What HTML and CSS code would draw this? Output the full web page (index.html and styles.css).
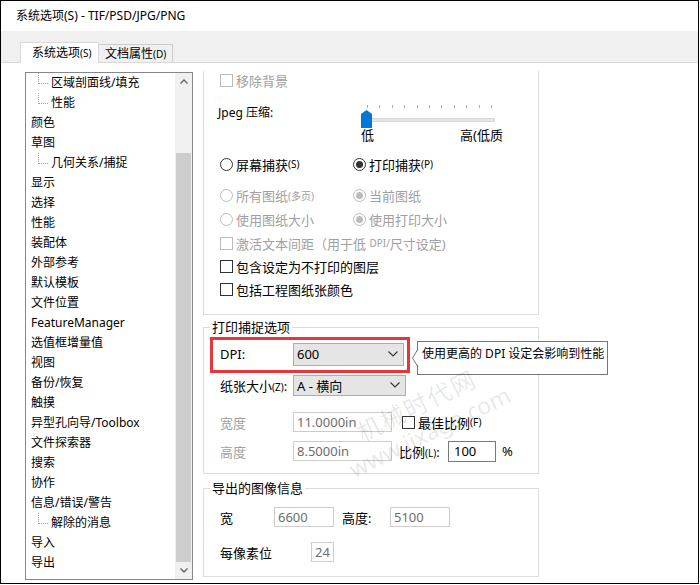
FILE: index.html
```html
<!DOCTYPE html>
<html lang="zh-CN">
<head>
    <meta charset="UTF-8">
    <title>系统选项(S) - TIF/PSD/JPG/PNG</title>
    <link rel="stylesheet" href="styles.css">
</head>
<body>
    <div class="window">
        <div class="titlebar">系统选项(S) - TIF/PSD/JPG/PNG</div>

        <div class="tabs">
            <div class="tab active">系统选项<span class="mn">(S)</span></div>
            <div class="tab">文档属性<span class="mn">(D)</span></div>
        </div>

        <div class="panel">
            <div class="tree">
                <ul class="tree-list">
                    <li><span class="branch"></span>区域剖面线/填充</li>
                    <li><span class="branch"></span>性能</li>
                    <li>颜色</li>
                    <li>草图</li>
                    <li><span class="branch"></span>几何关系/捕捉</li>
                    <li>显示</li>
                    <li>选择</li>
                    <li>性能</li>
                    <li>装配体</li>
                    <li>外部参考</li>
                    <li>默认模板</li>
                    <li>文件位置</li>
                    <li>FeatureManager</li>
                    <li>选值框增量值</li>
                    <li>视图</li>
                    <li>备份/恢复</li>
                    <li>触摸</li>
                    <li>异型孔向导/Toolbox</li>
                    <li>文件探索器</li>
                    <li>搜索</li>
                    <li>协作</li>
                    <li>信息/错误/警告</li>
                    <li><span class="branch"></span>解除的消息</li>
                    <li>导入</li>
                    <li>导出</li>
                </ul>
                <div class="vscroll">
                    <div class="sb-btn">
                        <svg width="8" height="5" viewBox="0 0 8 5"><polyline points="0.5,4.5 4,1 7.5,4.5" fill="none" stroke="#606060" stroke-width="1.3"/></svg>
                    </div>
                    <div class="sb-track"><div class="sb-thumb"></div></div>
                    <div class="sb-btn">
                        <svg width="8" height="5" viewBox="0 0 8 5"><polyline points="0.5,0.5 4,4 7.5,0.5" fill="none" stroke="#606060" stroke-width="1.3"/></svg>
                    </div>
                </div>
            </div>

            <div class="options">
                <!-- first group is scrolled, its title is out of view -->
                <div class="group group-cut">
                    <div class="group-body">
                        <div class="opt-row first disabled"><span class="check"></span>移除背景</div>

                        <div class="jpeg">
                            <div class="jpeg-label">Jpeg 压缩:</div>
                            <div class="slider">
                                <div class="ticks">
                                    <i></i><i></i><i></i><i></i><i></i><i></i><i></i><i></i><i></i><i></i><i></i>
                                </div>
                                <div class="track-row">
                                    <div class="track"></div>
                                    <div class="thumb"></div>
                                </div>
                                <div class="slider-labels"><span>低</span><span>高(低质</span></div>
                            </div>
                        </div>

                        <div class="opt-row">
                            <div class="col"><span class="radio"></span>屏幕捕获<span class="mn">(S)</span></div>
                            <div class="col"><span class="radio on"></span>打印捕获<span class="mn">(P)</span></div>
                        </div>
                        <div class="opt-row spaced disabled">
                            <div class="col"><span class="radio"></span>所有图纸<span class="mn">(多页)</span></div>
                            <div class="col"><span class="radio on"></span>当前图纸</div>
                        </div>
                        <div class="opt-row disabled">
                            <div class="col"><span class="radio"></span>使用图纸大小</div>
                            <div class="col"><span class="radio on"></span>使用打印大小</div>
                        </div>
                        <div class="opt-row disabled"><span class="check"></span>激活文本间距（用于低&nbsp;<span class="mn">DPI/</span>尺寸设定)</div>
                        <div class="opt-row tight"><span class="check"></span>包含设定为不打印的图层</div>
                        <div class="opt-row tight"><span class="check"></span>包括工程图纸张颜色</div>
                    </div>
                </div>

                <fieldset class="group">
                    <legend>打印捕捉选项</legend>
                    <div class="group-body print">
                        <div class="field-row dpi-row">
                            <span class="field-label">DPI:</span>
                            <div class="select">600
                                <svg width="10" height="6" viewBox="0 0 10 6"><polyline points="0.5,0.5 5,5 9.5,0.5" fill="none" stroke="#333" stroke-width="1.1"/></svg>
                            </div>
                            <div class="highlight"></div>
                            <div class="tooltip">
                                <svg class="tip-arrow" width="8" height="18" viewBox="0 0 8 18"><polygon points="8,0 1,9 8,18" fill="#fff"/><polyline points="7,0 1.5,9 7,18" fill="none" stroke="#767676" stroke-width="1"/></svg>
                                使用更高的 DPI 设定会影响到性能
                            </div>
                        </div>
                        <div class="field-row paper-row">
                            <span class="field-label">纸张大小<span class="mn">(Z)</span>:</span>
                            <div class="select">A - 横向
                                <svg width="10" height="6" viewBox="0 0 10 6"><polyline points="0.5,0.5 5,5 9.5,0.5" fill="none" stroke="#333" stroke-width="1.1"/></svg>
                            </div>
                        </div>
                        <div class="field-row size-row">
                            <span class="field-label muted">宽度</span>
                            <div class="input wide">11.0000in</div>
                            <span class="check fit-check"></span>最佳比例<span class="mn">(F)</span>
                        </div>
                        <div class="field-row height-row">
                            <span class="field-label muted">高度</span>
                            <div class="input wide">8.5000in</div>
                            <span class="scale-label">比例<span class="mn">(L)</span>:</span>
                            <div class="input active scale">100</div>
                            <span class="pct">%</span>
                        </div>
                    </div>
                </fieldset>

                <fieldset class="group">
                    <legend>导出的图像信息</legend>
                    <div class="group-body export">
                        <div class="field-row">
                            <span class="w-label">宽</span>
                            <div class="input px">6600</div>
                            <span class="h-label">高度:</span>
                            <div class="input px">5100</div>
                        </div>
                        <div class="field-row bits-row">
                            <span class="bits-label">每像素位</span>
                            <div class="input bits">24</div>
                        </div>
                    </div>
                </fieldset>

                <div class="watermark">
                    <div class="wm-cn">机械时代网</div>
                    <div class="wm-en">www.jixage.com</div>
                </div>
            </div>
        </div>
    </div>
</body>
</html>
```

FILE: styles.css
```css
* { margin: 0; padding: 0; box-sizing: border-box; }
body { font-family: "Noto Sans", "Noto Sans CJK SC", sans-serif; font-size: 13px; color: #000; background: #fff; width: 700px; height: 585px; overflow: hidden; }
.window { width: 699px; height: 584px; border: 1px solid #000; display: flex; flex-direction: column; background: #fff; }
.mn { font-size: 10px; }

.titlebar { height: 30px; line-height: 30px; padding-left: 15px; font-size: 12px; }

.tabs { height: 32px; background: #f0f0f0; border-bottom: 1px solid #d9d9d9; display: flex; align-items: flex-end; padding-left: 19px; }
.tab { font-size: 12px; border: 1px solid #d9d9d9; border-bottom: none; white-space: nowrap; }
.tab.active { height: 21px; width: 79px; line-height: 19px; padding-left: 11px; background: #fff; margin-bottom: -1px; position: relative; }
.tab + .tab { height: 18px; width: 75px; line-height: 17px; padding-left: 6px; margin-left: -1px; background: #f0f0f0; border-color: #cccccc; }

.panel { flex: 1; display: flex; align-items: flex-start; padding-left: 24px; }

/* tree */
.tree { margin-top: 9px; width: 168px; height: 508px; border: 1px solid #828790; display: flex; overflow: hidden; font-size: 12px; }
.tree-list { flex: 1; list-style: none; margin-top: 0; padding-left: 5px; }
.tree-list li { height: 20px; line-height: 20px; white-space: nowrap; }
.branch { display: inline-block; vertical-align: top; width: 10px; height: 11px; margin-left: 7px; margin-right: 3px; border-left: 1px dotted #a0a0a0; border-bottom: 1px dotted #a0a0a0; }
.vscroll { width: 17px; background: #f0f0f0; display: flex; flex-direction: column; }
.sb-btn { height: 17px; display: flex; align-items: center; justify-content: center; }
.sb-btn svg { display: block; }
.sb-track { flex: 1; padding-top: 63px; display: flex; }
.sb-thumb { flex: 1; margin: 0 1px; background: #cdcdcd; }

/* option groups */
.options { margin-top: 8px; margin-left: 10px; width: 336px; position: relative; }
.group { border: 1px solid #dcdcdc; min-width: 0; }
.group-cut { border-top: none; height: 244px; }
fieldset.group { margin-top: 4px; }
fieldset.group + fieldset.group { margin-top: 6px; }
legend { font-size: 13px; line-height: 16px; padding: 0 2px; margin-left: 6px; }
.group-body { padding-left: 16px; }

.opt-row { display: flex; align-items: center; height: 24px; white-space: nowrap; }
.opt-row.first { height: 18px; }
.opt-row.spaced { margin-top: 7px; }
.opt-row.tight { height: 23px; }
.col { display: flex; align-items: center; width: 133px; }
.disabled { color: #a0a0a0; }

.check, .radio { display: inline-block; width: 13px; height: 13px; border: 1px solid #333; background: #fff; margin-right: 3px; flex: none; }
.radio { border-radius: 50%; position: relative; }
.radio.on::after { content: ''; position: absolute; left: 2px; top: 2px; width: 7px; height: 7px; border-radius: 50%; background: #333; }
.disabled .check, .disabled .radio { border-color: #bcbcbc; }
.disabled .radio.on::after { background: #bcbcbc; }

/* jpeg slider */
.jpeg { display: flex; margin-top: 15px; margin-bottom: 10px; }
.jpeg-label { width: 143px; margin-left: -2px; line-height: 18px; font-size: 12px; }
.slider { width: 142px; }
.ticks { height: 6px; display: flex; justify-content: space-between; padding: 1px 11px 0 6px; }
.ticks i { display: block; width: 1px; height: 3px; background: #b0b0b0; }
.track-row { height: 18px; position: relative; padding: 8px 0 0 6px; }
.track { width: 128px; height: 4px; background: #e7e7e7; border: 1px solid #d6d6d6; }
.thumb { position: absolute; left: 0; top: 0; width: 11px; height: 18px; background: #0078d7; clip-path: polygon(50% 0, 100% 22%, 100% 100%, 0 100%, 0 22%); }
.slider-labels { display: flex; justify-content: space-between; line-height: 14px; }

/* print capture */
.print { padding-top: 7px; padding-bottom: 12px; }
.field-row { display: flex; align-items: center; height: 20px; white-space: nowrap; }
.field-label { width: 73px; flex: none; }
.muted { color: #a0a0a0; }
.dpi-row { height: 24px; position: relative; }
.paper-row { height: 22px; margin-top: 8px; }
.size-row { margin-top: 16px; }
.height-row { margin-top: 9px; }
.select { width: 111px; height: 22px; background: #e5e5e5; border: 1px solid #adadad; display: flex; align-items: center; justify-content: space-between; padding: 0 5px 0 3px; }
.select svg { display: block; }
.dpi-row .select { height: 23px; }
.paper-row .select { width: 113px; height: 21px; }
.input { height: 20px; border: 1px solid #cccccc; background: #fff; color: #6d6d6d; display: flex; align-items: center; padding-left: 3px; flex: none; }
.input.active { border-color: #7a7a7a; color: #000; }
.input.wide { width: 99px; }
.fit-check { margin-left: 10px; }
.scale-label { margin-left: 7px; width: 49px; }
.input.scale { width: 48px; height: 21px; padding-left: 5px; }
.pct { margin-left: 6px; }

.highlight { position: absolute; left: -10px; top: -5px; width: 200px; height: 36px; border: 3px solid #e8343a; }
.tooltip { position: absolute; left: 197px; top: -1px; width: 191px; height: 34px; border: 1px solid #767676; background: #fff; padding: 4px 0 0 4px; line-height: 16px; font-size: 12px; white-space: nowrap; }
.tip-arrow { position: absolute; left: -7px; top: 7px; display: block; }

/* exported image info */
.export { padding-top: 11px; padding-bottom: 14px; }
.w-label { width: 54px; }
.input.px { width: 60px; }
.h-label { margin-left: 8px; width: 48px; }
.bits-row { margin-top: 15px; }
.bits-label { width: 91px; }
.input.bits { width: 23px; padding-left: 3px; }

.watermark { position: absolute; left: 110px; top: 318px; width: 220px; text-align: center; transform: rotate(-26deg); color: rgba(0, 0, 0, 0.1); pointer-events: none; }
.wm-cn { font-size: 24px; line-height: 30px; letter-spacing: 2px; }
.wm-en { font-size: 23px; line-height: 28px; }
```
